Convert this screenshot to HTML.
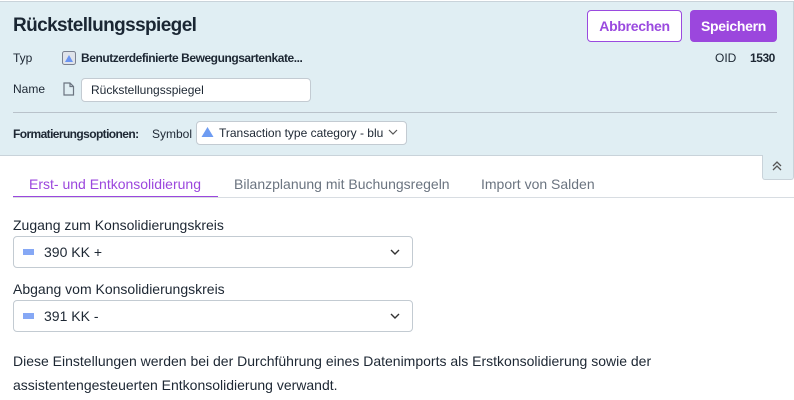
<!DOCTYPE html>
<html><head><meta charset="utf-8"><style>
*{box-sizing:border-box;margin:0;padding:0}
body{width:794px;height:400px;background:#fff;font-family:"Liberation Sans",Arial,sans-serif;color:#1d2733;position:relative;overflow:hidden}
.hdr{position:absolute;left:0;top:1px;width:794px;height:155px;background:#e0eef3;border:1px solid #c9d3da;border-left:none}
.a{position:absolute;white-space:nowrap}
.title{left:13px;top:15px;font-size:19px;font-weight:bold;color:#1a2633;letter-spacing:-0.6px}
.btn{position:absolute;top:10px;height:32px;border-radius:4px;font-size:14px;font-weight:bold;display:flex;align-items:center;justify-content:center;letter-spacing:-0.3px}
.sm{font-size:12px}
.b{font-weight:bold;letter-spacing:-0.45px}
.sel{position:absolute;border:1px solid #c3cbd2;border-radius:4px;background:#fff}
.tab{position:absolute;top:176px;font-size:14px;color:#6b7480}
</style></head><body>
<div class="hdr"></div>
<div class="a title">Rückstellungsspiegel</div>
<div class="btn" style="left:587px;width:95px;border:1px solid #9a4adf;color:#9a4adf;background:#fff">Abbrechen</div>
<div class="btn" style="left:690px;width:87px;background:#9b47dd;color:#fff">Speichern</div>
<div class="a sm" style="left:13px;top:51px">Typ</div>
<svg class="a" style="left:62px;top:51px" width="14" height="14"><rect x="0.5" y="0.5" width="13" height="13" rx="2" fill="#dfe3ea" stroke="#7a8190"/><path d="M3 11 L7 4 L11 11Z" fill="#6b94f0"/></svg>
<div class="a sm b" style="left:81px;top:51px">Benutzerdefinierte Bewegungsartenkate...</div>
<div class="a sm" style="left:715px;top:51px">OID</div>
<div class="a sm b" style="left:750px;top:51px">1530</div>
<div class="a sm" style="left:13px;top:82px">Name</div>
<svg class="a" style="left:63px;top:82px" width="12" height="14"><path d="M1 1 H7 L10.5 4.5 V13 H1Z M7 1 V4.5 H10.5" fill="none" stroke="#6b7480" stroke-width="1.2"/></svg>
<div class="sel" style="left:81px;top:78px;width:230px;height:24px"></div>
<div class="a sm" style="left:91px;top:83px">Rückstellungsspiegel</div>
<div class="a" style="left:13px;top:112px;width:764px;border-top:1px solid #b9c2ca"></div>
<div class="a sm b" style="left:13px;top:127px;letter-spacing:-0.6px">Formatierungsoptionen:</div>
<div class="a sm" style="left:152px;top:127px">Symbol</div>
<div class="sel" style="left:196px;top:121px;width:211px;height:24px"></div>
<svg class="a" style="left:201px;top:126px" width="13" height="12"><path d="M0.5 11 L6.5 1 L12.5 11Z" fill="#6e9cf2"/></svg>
<div class="a sm" style="left:219px;top:126px">Transaction type category - blu</div>
<svg class="a" style="left:388px;top:129px" width="10" height="7"><path d="M1 1 L5 5 L9 1" fill="none" stroke="#555" stroke-width="1.2"/></svg>
<div class="a" style="left:762px;top:155px;width:32px;height:25px;background:#e0eef3;border:1px solid #c9d3da;border-top:none;border-radius:0 0 3px 3px"></div>
<svg class="a" style="left:771px;top:160px" width="12" height="12"><path d="M2 6 L6 2 L10 6 M2 10 L6 6 L10 10" fill="none" stroke="#555" stroke-width="1.3"/></svg>
<div class="tab" style="left:29px;color:#9b47dd">Erst- und Entkonsolidierung</div>
<div class="tab" style="left:234px">Bilanzplanung mit Buchungsregeln</div>
<div class="tab" style="left:481px">Import von Salden</div>
<div class="a" style="left:13px;top:196px;width:205px;height:2px;background:#9b47dd"></div>
<div class="a" style="left:13px;top:197px;width:781px;border-top:1px solid #d8dde2"></div>
<div class="a" style="left:13px;top:217px;font-size:14px">Zugang zum Konsolidierungskreis</div>
<div class="sel" style="left:13px;top:236px;width:400px;height:32px"></div>
<div class="a" style="left:23px;top:249px;width:11px;height:6px;background:#86a8f5"></div>
<div class="a" style="left:44px;top:244px;font-size:14px">390 KK +</div>
<svg class="a" style="left:390px;top:249px" width="10" height="7"><path d="M1 1 L5 5 L9 1" fill="none" stroke="#333" stroke-width="1.4"/></svg>
<div class="a" style="left:13px;top:281px;font-size:14px">Abgang vom Konsolidierungskreis</div>
<div class="sel" style="left:13px;top:300px;width:400px;height:32px"></div>
<div class="a" style="left:23px;top:313px;width:11px;height:6px;background:#86a8f5"></div>
<div class="a" style="left:44px;top:308px;font-size:14px">391 KK -</div>
<svg class="a" style="left:390px;top:313px" width="10" height="7"><path d="M1 1 L5 5 L9 1" fill="none" stroke="#333" stroke-width="1.4"/></svg>
<div class="a" style="left:13px;top:349px;font-size:14px;line-height:24px">Diese Einstellungen werden bei der Durchführung eines Datenimports als Erstkonsolidierung sowie der<br>assistentengesteuerten Entkonsolidierung verwandt.</div>
</body></html>
